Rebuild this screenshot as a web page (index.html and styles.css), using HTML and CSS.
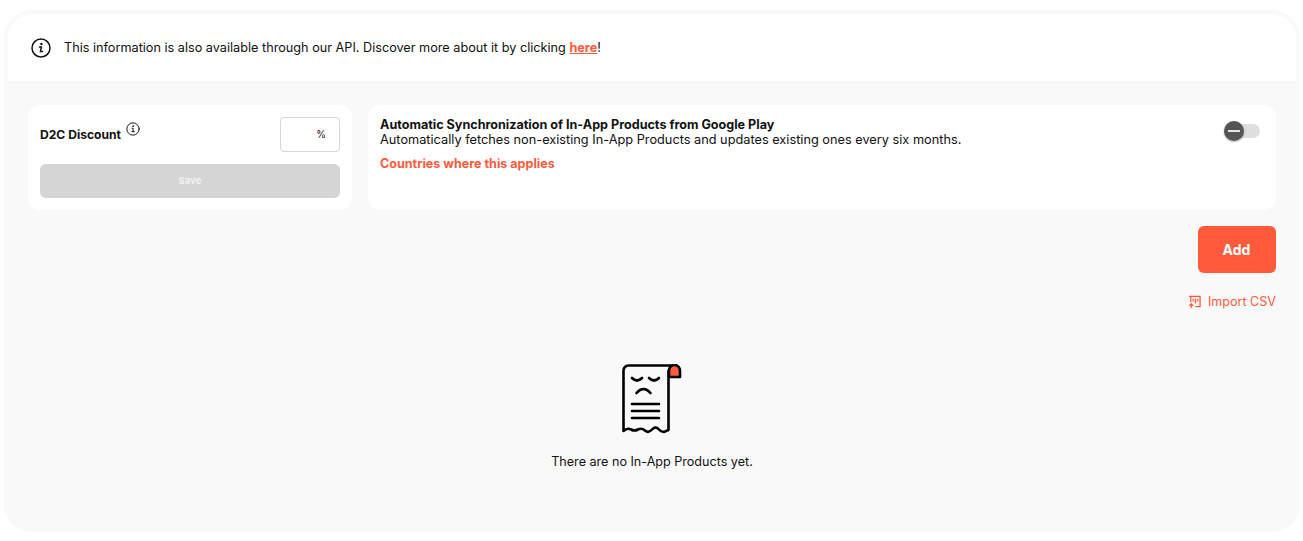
FILE: index.html
```html
<!DOCTYPE html>
<html lang="en">
<head>
    <meta charset="UTF-8">
    <title>In-App Products</title>
    <link rel="stylesheet" href="styles.css">
</head>
<body>
    <div class="container">
        <div class="notice">
            <svg class="notice-icon" viewBox="0 0 20 20" fill="none" stroke="#111" stroke-width="1.5" stroke-linecap="round">
                <circle cx="10" cy="10" r="9"/>
                <path d="M8.4 9h2l-.9 4.600h2"/>
                <circle cx="10.400" cy="6" r=".5" fill="#111"/>
            </svg>
            <p>This information is also available through our API. Discover more about it by clicking <a href="#">here</a>!</p>
        </div>
        <div class="content">
            <div class="cards">
                <div class="card discount">
                    <div class="discount-row">
                        <span class="discount-label">D2C Discount</span>
                        <svg class="small-info" viewBox="0 0 20 20" fill="none" stroke="#111" stroke-width="1.4" stroke-linecap="round">
                            <circle cx="10" cy="10" r="8.800"/>
                            <path d="M8.600 9h1.600v4.800M8.400 13.800h3.400"/>
                            <circle cx="10" cy="5.900" r=".5" fill="#111"/>
                        </svg>
                        <div class="percent-input">%</div>
                    </div>
                    <button class="save">Save</button>
                </div>
                <div class="card sync">
                    <div class="sync-text">
                        <h3>Automatic Synchronization of In-App Products from Google Play</h3>
                        <p>Automatically fetches non-existing In-App Products and updates existing ones every six months.</p>
                        <a href="#">Countries where this applies</a>
                    </div>
                    <div class="toggle"><span class="knob"></span></div>
                </div>
            </div>
            <div class="actions">
                <button class="add">Add</button>
                <a class="import" href="#">
                    <svg viewBox="0 0 14 14" fill="none" stroke="#ff5a3c" stroke-width="1.400">
                        <path d="M1 1h12v11H8"/>
                        <path d="M3 7V1M5.500 3.500v3M8 3.500v5M10.500 3.500v3"/>
                        <path d="M3.500 13.500V9M1.300 11l2.200-2 2.200 2"/>
                    </svg>
                    Import CSV
                </a>
            </div>
            <div class="empty">
                <svg class="empty-icon" viewBox="0 0 60 70" fill="none" stroke="#000" stroke-width="2.600" stroke-linecap="round" stroke-linejoin="round">
                    <path d="M52 1.500H6.500a5 5 0 0 0-5 5V67q4-3.500 7.500-1.500t7 0 7 1 7-1 7 0 7 1.500l2.500-1V7"/>
                    <path d="M47 13V6.500a5.500 5.500 0 0 1 11 0V13z" fill="#ff5a3c"/>
                    <path d="M10 14q5 5 10 0M27 14q5 5 10 0"/>
                    <path d="M14.500 29q7-8 14 0"/>
                    <path d="M10 40h27M10 47h27M10 54h27"/>
                </svg>
                <p>There are no In-App Products yet.</p>
            </div>
        </div>
    </div>
</body>
</html>
```

FILE: styles.css
```css
body {
    margin: 0;
    font-family: 'Inter', 'Liberation Sans', sans-serif;
    background-color: #fff;
    color: #111;
    font-size: 12px;
}
.container {
    margin: 10px 3px 9px 4px;
    height: 522px;
    background-color: #f9f9f9;
    border-radius: 28px;
    padding: 4px 4px 0;
    box-sizing: border-box;
    overflow: hidden;
}
.notice {
    height: 67px;
    background-color: #fff;
    border-radius: 24px 24px 0 0;
    display: flex;
    align-items: center;
    gap: 13px;
    padding-left: 23px;
}
.notice-icon {
    width: 20px;
    height: 20px;
}
.notice p {
    margin: 0;
    font-size: 12.68px;
}
.notice a {
    color: #ff5a3c;
    font-weight: 700;
}
.content {
    padding: 24px 20px 0;
}
.cards {
    display: flex;
    gap: 16px;
}
.card {
    background-color: #fff;
    border-radius: 12px;
    height: 105px;
    box-sizing: border-box;
}
.discount {
    width: 324px;
    flex-shrink: 0;
    padding: 12px;
}
.discount-row {
    display: flex;
    align-items: center;
    height: 35px;
    margin-bottom: 12px;
}
.discount-label {
    font-weight: 700;
    font-size: 12.1px;
}
.small-info {
    width: 14px;
    height: 14px;
    margin-left: 5px;
    margin-top: -11px;
}
.percent-input {
    margin-left: auto;
    width: 60px;
    height: 35px;
    box-sizing: border-box;
    border: 1px solid #d6d6d6;
    border-radius: 4px;
    font-size: 10px;
    line-height: 33px;
    text-align: right;
    padding-right: 13px;
}
.save {
    display: block;
    width: 100%;
    height: 34px;
    border: none;
    border-radius: 6px;
    padding-bottom: 3px;
    background-color: #d5d5d5;
    color: #f1f1f1;
    font-family: inherit;
    font-size: 9.5px;
    font-weight: 700;
}
.sync {
    flex: 1;
    display: flex;
    justify-content: space-between;
    padding: 12px 16px 0 12px;
}
.sync h3 {
    margin: 0;
    font-size: 12.58px;
    line-height: 15px;
    font-weight: 700;
}
.sync p {
    margin: 0 0 8px;
    font-size: 12.75px;
    line-height: 16px;
}
.sync a {
    display: block;
    color: #ff5a3c;
    font-size: 12.55px;
    font-weight: 700;
    text-decoration: none;
}
.toggle {
    position: relative;
    width: 32px;
    height: 14px;
    margin-top: 7px;
    border-radius: 7px;
    background-color: #dedede;
}
.knob {
    position: absolute;
    left: -4px;
    top: -3px;
    width: 20px;
    height: 20px;
    border-radius: 50%;
    background-color: #555;
    box-shadow: 0 1px 2px rgba(0, 0, 0, 0.3);
}
.knob::after {
    content: "";
    position: absolute;
    left: 4px;
    top: 9px;
    width: 12px;
    height: 2px;
    background-color: #e6e6e6;
}
.actions {
    display: flex;
    flex-direction: column;
    align-items: flex-end;
    margin-top: 16px;
}
.add {
    width: 78px;
    height: 47px;
    border: none;
    border-radius: 6px;
    padding-right: 7px;
    background-color: #ff5a3c;
    color: #fff;
    font-family: inherit;
    font-size: 14px;
    font-weight: 700;
}
.import {
    display: flex;
    align-items: center;
    gap: 7px;
    margin-top: 21px;
    color: #ff5a3c;
    font-size: 12.55px;
    text-decoration: none;
}
.import svg {
    width: 13px;
    height: 14px;
}
.empty {
    display: flex;
    flex-direction: column;
    align-items: center;
    margin-top: 55px;
}
.empty-icon {
    width: 60px;
    height: 70px;
}
.empty p {
    margin: 20px 0 0;
    font-size: 12.58px;
}
```
